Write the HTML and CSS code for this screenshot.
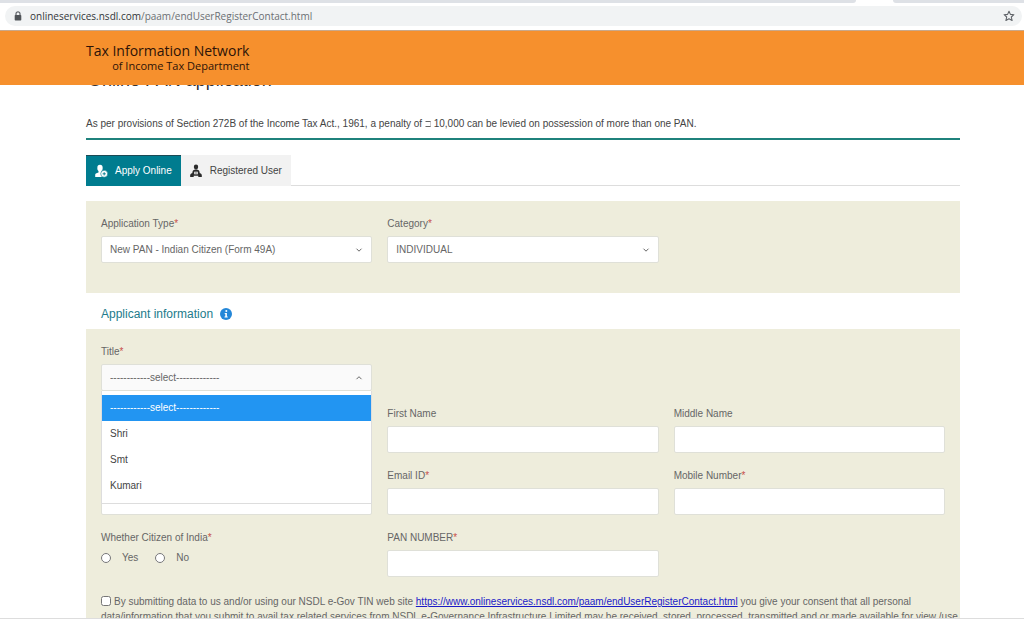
FILE: index.html
```html
<!DOCTYPE html>
<html lang="en">
<head>
<meta charset="utf-8">
<meta name="viewport" content="width=device-width, initial-scale=1">
<title>Online PAN application</title>
<link rel="stylesheet" href="styles.css">
</head>
<body>
<div class="window">
  <div class="tabstrip"><span class="strip-left"></span><span class="strip-right"></span></div>
  <div class="toolbar">
    <div class="omnibox">
      <svg class="lock" viewBox="0 0 8 10" aria-hidden="true"><path d="M2 4.5V2.8a2 2 0 0 1 4 0v1.7" fill="none" stroke="#5f6368" stroke-width="1.2"/><rect x="0.7" y="4" width="6.6" height="5.5" rx=".7" fill="#505458"/></svg>
      <span class="url"><span class="host">onlineservices.nsdl.com</span>/paam/endUserRegisterContact.html</span>
      <button class="star" type="button" aria-label="Bookmark this page"><svg viewBox="0 0 12 12" aria-hidden="true"><path d="M6 1.2l1.4 3.2 3.5.3-2.6 2.3.8 3.5L6 8.7l-3.1 1.8.8-3.5L1.100 4.700l3.5-.3z" fill="none" stroke="#5f6368" stroke-width="1.1" stroke-linejoin="round"/></svg></button>
    </div>
  </div>
  <header class="banner">
    <div class="brand">
      <div class="brand-name">Tax Information Network</div>
      <div class="brand-sub">of Income Tax Department</div>
    </div>
  </header>
  <main class="page">
    <h1 class="page-title">Online PAN application</h1>
    <p class="notice">As per provisions of Section 272B of the Income Tax Act., 1961, a penalty of <span class="currency"></span> 10,000 can be levied on possession of more than one PAN.</p>
    <nav class="tabs">
      <button class="tab tab-active" type="button">
        <svg class="tab-icon" viewBox="0 0 14 14" aria-hidden="true"><ellipse cx="6" cy="4" rx="2.700" ry="3.300" fill="#fff"/><path d="M4.500 6h3v2.500l2 .7V13H1.200v-2c0-1.600 1-2.100 3.300-2.600z" fill="#fff"/><circle cx="10.200" cy="9.800" r="3.500" fill="#fff" stroke="#007c8f" stroke-width=".6"/><path d="M8.600 9.800h3.200M10.200 8.200v3.200" stroke="#007c8f" stroke-width=".9"/></svg>
        Apply Online
      </button>
      <button class="tab" type="button">
        <svg class="tab-icon" viewBox="0 0 14 14" aria-hidden="true"><ellipse cx="7" cy="3" rx="2.200" ry="2.400" fill="#2b2b2b"/><path d="M3.300 9c0-2.200 1-3.300 2.700-3.600h2c1.700.3 2.700 1.400 2.700 3.600z" fill="#2b2b2b"/><path d="M1.200 13c-.3-1.900.2-3.800 2.300-4h7c2.100.2 2.600 2.100 2.300 4H9.300v-1.200H4.700V13z" fill="#2b2b2b"/><rect x="5.200" y="7.700" width="3.600" height="2.600" fill="#f2f2f2"/><path d="M6.200 9h1.600" stroke="#2b2b2b" stroke-width=".8"/></svg>
        Registered User
      </button>
    </nav>
    <form>
      <section class="panel panel-type">
        <div class="field">
          <label for="apptype">Application Type<span class="req">*</span></label>
          <div class="select"><select id="apptype"><option>New PAN - Indian Citizen (Form 49A)</option></select><svg class="chevron" viewBox="0 0 8 6" aria-hidden="true"><path d="M1.500 1.700L4 4.200l2.500-2.500"/></svg></div>
        </div>
        <div class="field">
          <label for="category">Category<span class="req">*</span></label>
          <div class="select"><select id="category"><option>INDIVIDUAL</option></select><svg class="chevron" viewBox="0 0 8 6" aria-hidden="true"><path d="M1.500 1.700L4 4.200l2.500-2.500"/></svg></div>
        </div>
      </section>
      <h2 class="section-title">Applicant information
        <svg class="info" viewBox="0 0 12 12" aria-hidden="true"><circle cx="6" cy="6" r="6" fill="#2487d8"/><circle cx="6.300" cy="3" r="1" fill="#fff"/><path d="M4.700 5h2.200v3.600h.8v1H4.500v-1h.8V6h-.6z" fill="#fff"/></svg>
      </h2>
      <section class="panel panel-applicant">
        <div class="field col-1">
          <label for="title">Title<span class="req">*</span></label>
          <div class="select select-open">
            <select id="title"><option>------------select-------------</option></select>
            <svg class="chevron" viewBox="0 0 8 6" aria-hidden="true"><path d="M1.500 4.200L4 1.700l2.500 2.500"/></svg>
            <ul class="menu" role="listbox" aria-label="Title">
              <li class="option option-active" role="option" aria-selected="true">------------select-------------</li>
              <li class="option" role="option">Shri</li>
              <li class="option" role="option">Smt</li>
              <li class="option" role="option">Kumari</li>
            </ul>
          </div>
        </div>
        <div class="field col-1"><input class="text" type="text" aria-label="Last Name"></div>
        <div class="field"><label for="first">First Name</label><input class="text" id="first" type="text"></div>
        <div class="field"><label for="middle">Middle Name</label><input class="text" id="middle" type="text"></div>
        <div class="field col-1"><input class="text" type="text" aria-label="Date of Birth"></div>
        <div class="field"><label for="email">Email ID<span class="req">*</span></label><input class="text" id="email" type="email"></div>
        <div class="field"><label for="mobile">Mobile Number<span class="req">*</span></label><input class="text" id="mobile" type="tel"></div>
        <fieldset class="citizen col-1">
          <legend>Whether Citizen of India<span class="req">*</span></legend>
          <div class="radios">
            <label class="radio"><input type="radio" name="citizen"> Yes</label>
            <label class="radio"><input type="radio" name="citizen"> No</label>
          </div>
        </fieldset>
        <div class="field"><label for="pan">PAN NUMBER<span class="req">*</span></label><input class="text" id="pan" type="text"></div>
        <div class="consent">
          <input id="consent" type="checkbox"><label for="consent">By submitting data to us and/or using our NSDL e-Gov TIN web site <a href="https://www.onlineservices.nsdl.com/paam/endUserRegisterContact.html">https://www.onlineservices.nsdl.com/paam/endUserRegisterContact.html</a> you give your consent that all personal data/information that you submit to avail tax related services from NSDL e-Governance Infrastructure Limited may be received, stored, processed, transmitted and or made available for view /use</label>
        </div>
      </section>
    </form>
  </main>
  <div class="window-edge"></div>
</div>
</body>
</html>
```
FILE: styles.css
```css
* { box-sizing: border-box; }
body {
  margin: 0;
  background: #fff;
  color: #666;
  font: 10px/16px "Liberation Sans", Arial, sans-serif;
}
button, input, select { font: inherit; color: inherit; }
.window { display: flex; flex-direction: column; height: 100vh; overflow: hidden; }

/* Browser frame */
.tabstrip { display: flex; justify-content: space-between; gap: 37px; height: 3px; flex: none; }
.strip-left, .strip-right { background: #dee1e6; }
.strip-left { flex: 1; border-bottom-right-radius: 3px; }
.strip-right { flex: 0 0 131px; border-bottom-left-radius: 3px; }
.toolbar { flex: none; padding: 3px 2px 4px 5px; border-bottom: 1px solid #c9a88a; }
.omnibox {
  display: flex;
  align-items: center;
  height: 20px;
  padding: 0 7px 0 9px;
  border-radius: 10px;
  background: #f1f3f4;
}
.lock { width: 8px; height: 10px; margin-right: 8px; }
.url { flex: 1; color: #6b6f73; font: 10px/20px "Open Sans", "Noto Sans", sans-serif; }
.host { color: #333639; }
.star { display: flex; padding: 0; border: 0; background: none; }
.star svg { width: 12px; height: 12px; }

/* Site banner */
.banner { flex: none; display: flex; height: 54px; padding: 12px 64px 0 86px; background: #f6902d; color: #2d1308; }
.brand { font-family: "Open Sans", "Noto Sans", sans-serif; text-align: right; }
.brand-name { font-size: 14px; line-height: 16px; }
.brand-sub { font-size: 11px; line-height: 14px; }

/* Page */
.page { flex: 1; min-height: 0; overflow: hidden; padding: 0 64px 0 86px; }
.page-title { margin: -15px 0 26px 2px; color: #333; font-size: 18px; font-weight: 400; line-height: 20px; }
.notice { margin: 0 0 15px; padding-bottom: 6px; border-bottom: 2px solid #1f827c; color: #444; }
.currency {
  display: inline-block;
  width: 6px;
  height: 6px;
  border: 1px solid #666;
  border-left-color: transparent;
  border-right-color: #ccc;
}
.tabs { display: flex; margin-bottom: 15px; border-bottom: 1px solid #ddd; }
.tab {
  display: flex;
  align-items: center;
  gap: 7px;
  height: 31px;
  margin-bottom: -1px;
  padding: 0 9px 0 8px;
  border: 0;
  background: #f2f2f2;
  color: #444;
}
.tab-active { border-top: 1px solid #1c4a55; background: #007c8f; color: #fff; }
.tab-icon { width: 14px; height: 14px; }
.panel {
  display: grid;
  grid-template-columns: repeat(3, minmax(0, 1fr));
  gap: 15px;
  padding: 15px;
  background: #eeeddc;
}
.panel-type { padding-bottom: 30px; }
.col-1 { grid-column: 1; }
.field { display: flex; flex-direction: column; justify-content: flex-end; gap: 4px; }
.req { color: #c8504a; }
.text, .select select {
  display: block;
  width: 100%;
  height: 27px;
  margin: 0;
  padding: 0 8px;
  border: 1px solid #dfe0d8;
  border-radius: 2px;
  background: #fff;
}
.select { position: relative; }
.select select { appearance: none; }
.select-open select { background: #fafafa; }
.chevron { position: absolute; top: 11px; right: 9px; width: 8px; height: 6px; fill: none; stroke: #666; stroke-width: 1; pointer-events: none; }
.menu {
  position: absolute;
  z-index: 1;
  top: 100%;
  left: 0;
  right: 0;
  margin: 0;
  padding: 4px 0;
  border: 1px solid #ddd;
  border-top: 0;
  background: #fff;
  color: #444;
  list-style: none;
}
.option { padding: 0 8px; line-height: 26px; }
.option-active { background: #2295f2; color: #fff; }
.section-title {
  display: flex;
  align-items: center;
  gap: 7px;
  margin: 0;
  padding: 11px 15px 5px;
  color: #227b8b;
  font-size: 12px;
  font-weight: 400;
  line-height: 20px;
}
.info { width: 12px; height: 12px; }
.citizen { min-width: 0; margin: 0; padding: 0; border: 0; }
.citizen legend { padding: 0; }
.radios { display: flex; gap: 17px; padding-top: 4px; }
.radio { display: flex; align-items: center; gap: 11px; }
.radio input { width: 10px; height: 10px; margin: 0; }
.consent { grid-column: 1 / -1; margin-right: -15px; padding-top: 2px; line-height: 15px; }
.consent input { width: 10px; height: 10px; margin: 0 3px 0 0; vertical-align: -1px; }
.consent a { color: #1a1ac8; }
.window-edge { flex: none; height: 3px; border-top: 1px solid #ddd; background: #fff; }
```
